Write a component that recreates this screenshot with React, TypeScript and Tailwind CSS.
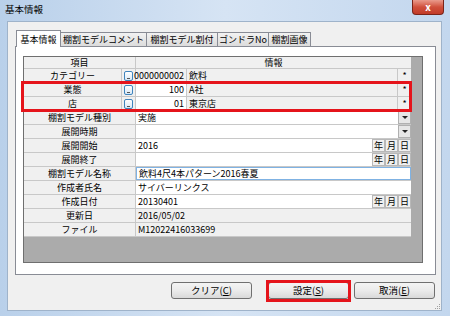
import React from "react";

// grid geometry (px) taken from the dialog
const ROW = "flex h-[14px] border-b border-[#c8c8c8]";
const GRAY = "bg-[#f0f0f0]";

function Label({ text, withButton }: { text: string; withButton?: boolean }) {
  return (
    <>
      <div
        className={`${withButton ? "w-[98px]" : "w-[112px]"} h-full flex items-center justify-center ${GRAY} border-r border-[#c8c8c8]`}
      >
        {text}
      </div>
      {withButton && (
        <div className={`w-[14px] h-full flex items-center justify-center ${GRAY} border-r border-[#c8c8c8]`}>
          <div className="w-[9px] h-[10px] rounded-[2px] border border-[#3f84bd] bg-linear-to-b from-white to-[#d8e8f6] flex items-end justify-center pb-[1px]">
            <div className="w-[3px] h-[1px] bg-[#555]" />
          </div>
        </div>
      )}
    </>
  );
}

function Cell({
  children,
  className = "",
}: {
  children?: React.ReactNode;
  className?: string;
}) {
  return (
    <div className={`h-full flex items-center px-[2px] border-r border-[#c8c8c8] ${className}`}>
      {children}
    </div>
  );
}

function Dropdown() {
  return (
    <div className="w-[13px] h-full flex items-center justify-center bg-[#e6e6e6] border border-[#b0b0b0]">
      <div className="w-0 h-0 border-l-[3px] border-r-[3px] border-t-[3px] border-l-transparent border-r-transparent border-t-[#222]" />
    </div>
  );
}

function DateButtons() {
  return (
    <>
      {["年", "月", "日"].map((d) => (
        <div
          key={d}
          className="w-[13px] h-full flex items-center justify-center bg-[#f0f0f0] border border-[#b8b8b8] text-[9px]"
        >
          {d}
        </div>
      ))}
    </>
  );
}

function Button({ label, hot }: { label: string; hot: string }) {
  const i = label.indexOf("(");
  return (
    <div className="w-[81px] h-[17px] flex items-center justify-center rounded-[3px] border border-[#707070] bg-linear-to-b from-[#f4f4f4] via-[#ebebeb] to-[#d9d9d9] text-[9.5px]">
      {label.slice(0, i)}(<span className="underline">{hot}</span>)
    </div>
  );
}

export default function App() {
  const tabs = [
    { t: "棚割モデルコメント", w: "w-[86px]" },
    { t: "棚割モデル割付", w: "w-[71px]" },
    { t: "ゴンドラNo", w: "w-[51px]" },
    { t: "棚割画像", w: "w-[42px]" },
  ];

  return (
    <div className="w-[450px] h-[316px] overflow-hidden bg-linear-to-r from-[#b9d0ea] via-[#d6e4f4] to-[#c3d7ee] font-['Noto_Sans_CJK_JP',sans-serif] text-black text-[9px] leading-none flex flex-col">
      {/* title bar */}
      <div className="h-[21px] shrink-0 flex items-start justify-between pl-[5px] pr-[6px]">
        <span className="pt-[5px] text-[9.5px]">基本情報</span>
        <div className="w-[32px] h-[15px] rounded-b-[4px] border border-t-0 border-[#7a2419] bg-linear-to-b from-[#e99a8c] via-[#d0503c] to-[#c13b28] flex items-center justify-center text-white text-[10px] font-bold">
          x
        </div>
      </div>

      {/* client area */}
      <div className="relative ml-[7px] mr-[8px] h-[290px] bg-[#f0f0f0] border border-[#9fb3ca] pt-[8px] pl-[7px] pr-[5px] flex flex-col">
        {/* tabs */}
        <div className="flex items-end h-[17px] pl-[1px] relative z-10">
          <div className="w-[45px] h-[17px] bg-white border border-b-0 border-[#898c95] flex items-center justify-center text-[9px]">
            基本情報
          </div>
          {tabs.map((tab) => (
            <div
              key={tab.t}
              className={`${tab.w} h-[14px] mb-[1px] bg-linear-to-b from-[#f2f2f2] to-[#dcdcdc] border border-l-0 border-b-0 border-[#898c95] flex items-center justify-center`}
            >
              {tab.t}
            </div>
          ))}
        </div>

        {/* tab panel */}
        <div className="-mt-[1px] h-[229px] bg-white border border-[#898c95] pl-[7px] pt-[9px]">
          <div className="relative w-[400px] h-[207px] bg-[#ababab] border border-[#6f6f6f]">
            {/* header */}
            <div className="flex h-[12px] border-b border-[#c8c8c8] w-[387px]">
              <div className={`w-[112px] h-full flex items-center justify-center ${GRAY} border-r border-[#c8c8c8]`}>
                項目
              </div>
              <div className={`flex-1 h-full flex items-center justify-center ${GRAY}`}>情報</div>
            </div>

            <div className="w-[387px]">
              <div className={ROW}>
                <Label text="カテゴリー" withButton />
                <Cell className={`w-[51px] justify-end ${GRAY}`}>0000000002</Cell>
                <Cell className={`flex-1 ${GRAY}`}>飲料</Cell>
                <div className={`w-[13px] h-full flex items-center justify-center ${GRAY}`}>*</div>
              </div>
              <div className={ROW}>
                <Label text="業態" withButton />
                <Cell className="w-[51px] justify-end bg-white">100</Cell>
                <Cell className={`flex-1 ${GRAY}`}>A社</Cell>
                <div className={`w-[13px] h-full flex items-center justify-center ${GRAY}`}>*</div>
              </div>
              <div className={ROW}>
                <Label text="店" withButton />
                <Cell className="w-[51px] justify-end bg-white">01</Cell>
                <Cell className={`flex-1 ${GRAY}`}>東京店</Cell>
                <div className={`w-[13px] h-full flex items-center justify-center ${GRAY}`}>*</div>
              </div>
              <div className={ROW}>
                <Label text="棚割モデル種別" />
                <Cell className="flex-1 bg-white border-r-0">実施</Cell>
                <Dropdown />
              </div>
              <div className={ROW}>
                <Label text="展開時期" />
                <Cell className="flex-1 bg-white border-r-0" />
                <Dropdown />
              </div>
              <div className={ROW}>
                <Label text="展開開始" />
                <Cell className="flex-1 bg-white border-r-0">2016</Cell>
                <DateButtons />
              </div>
              <div className={ROW}>
                <Label text="展開終了" />
                <Cell className="flex-1 bg-white border-r-0" />
                <DateButtons />
              </div>
              <div className={ROW}>
                <Label text="棚割モデル名称" />
                <div className="flex-1 h-full flex items-center px-[2px] bg-white border border-[#7fb2e3]">
                  飲料4尺4本パターン2016春夏
                </div>
              </div>
              <div className={ROW}>
                <Label text="作成者氏名" />
                <Cell className="flex-1 bg-white border-r-0">サイバーリンクス</Cell>
              </div>
              <div className={ROW}>
                <Label text="作成日付" />
                <Cell className="flex-1 bg-white border-r-0">20130401</Cell>
                <DateButtons />
              </div>
              <div className={ROW}>
                <Label text="更新日" />
                <Cell className={`flex-1 ${GRAY} border-r-0`}>2016/05/02</Cell>
              </div>
              <div className={ROW}>
                <Label text="ファイル" />
                <Cell className={`flex-1 ${GRAY} border-r-0`}>M12022416033699</Cell>
              </div>
            </div>

            {/* red highlight over 業態 / 店 */}
            <div className="absolute left-[-3px] top-[24px] w-[391px] h-[31px] border-[3px] border-[#e5141b]" />
          </div>
        </div>

        {/* buttons */}
        <div className="flex justify-end items-center gap-[5px] mt-[7px] pr-[1px]">
          <Button label="クリア(C)" hot="C" />
          <div className="w-[6px]" />
          <div className="relative">
            <Button label="設定(S)" hot="S" />
            <div className="absolute -left-[2px] -top-[2px] w-[85px] h-[22px] border-[3px] border-[#e5141b]" />
          </div>
          <Button label="取消(E)" hot="E" />
        </div>

        {/* size grip */}
        <div className="absolute right-[1px] bottom-[1px] grid grid-cols-3 gap-[1px]">
          {[0, 0, 1, 0, 1, 1, 1, 1, 1].map((v, k) => (
            <div key={k} className={`w-[1px] h-[1px] ${v ? "bg-[#a0a0a0]" : "bg-transparent"}`} />
          ))}
        </div>
      </div>
    </div>
  );
}
